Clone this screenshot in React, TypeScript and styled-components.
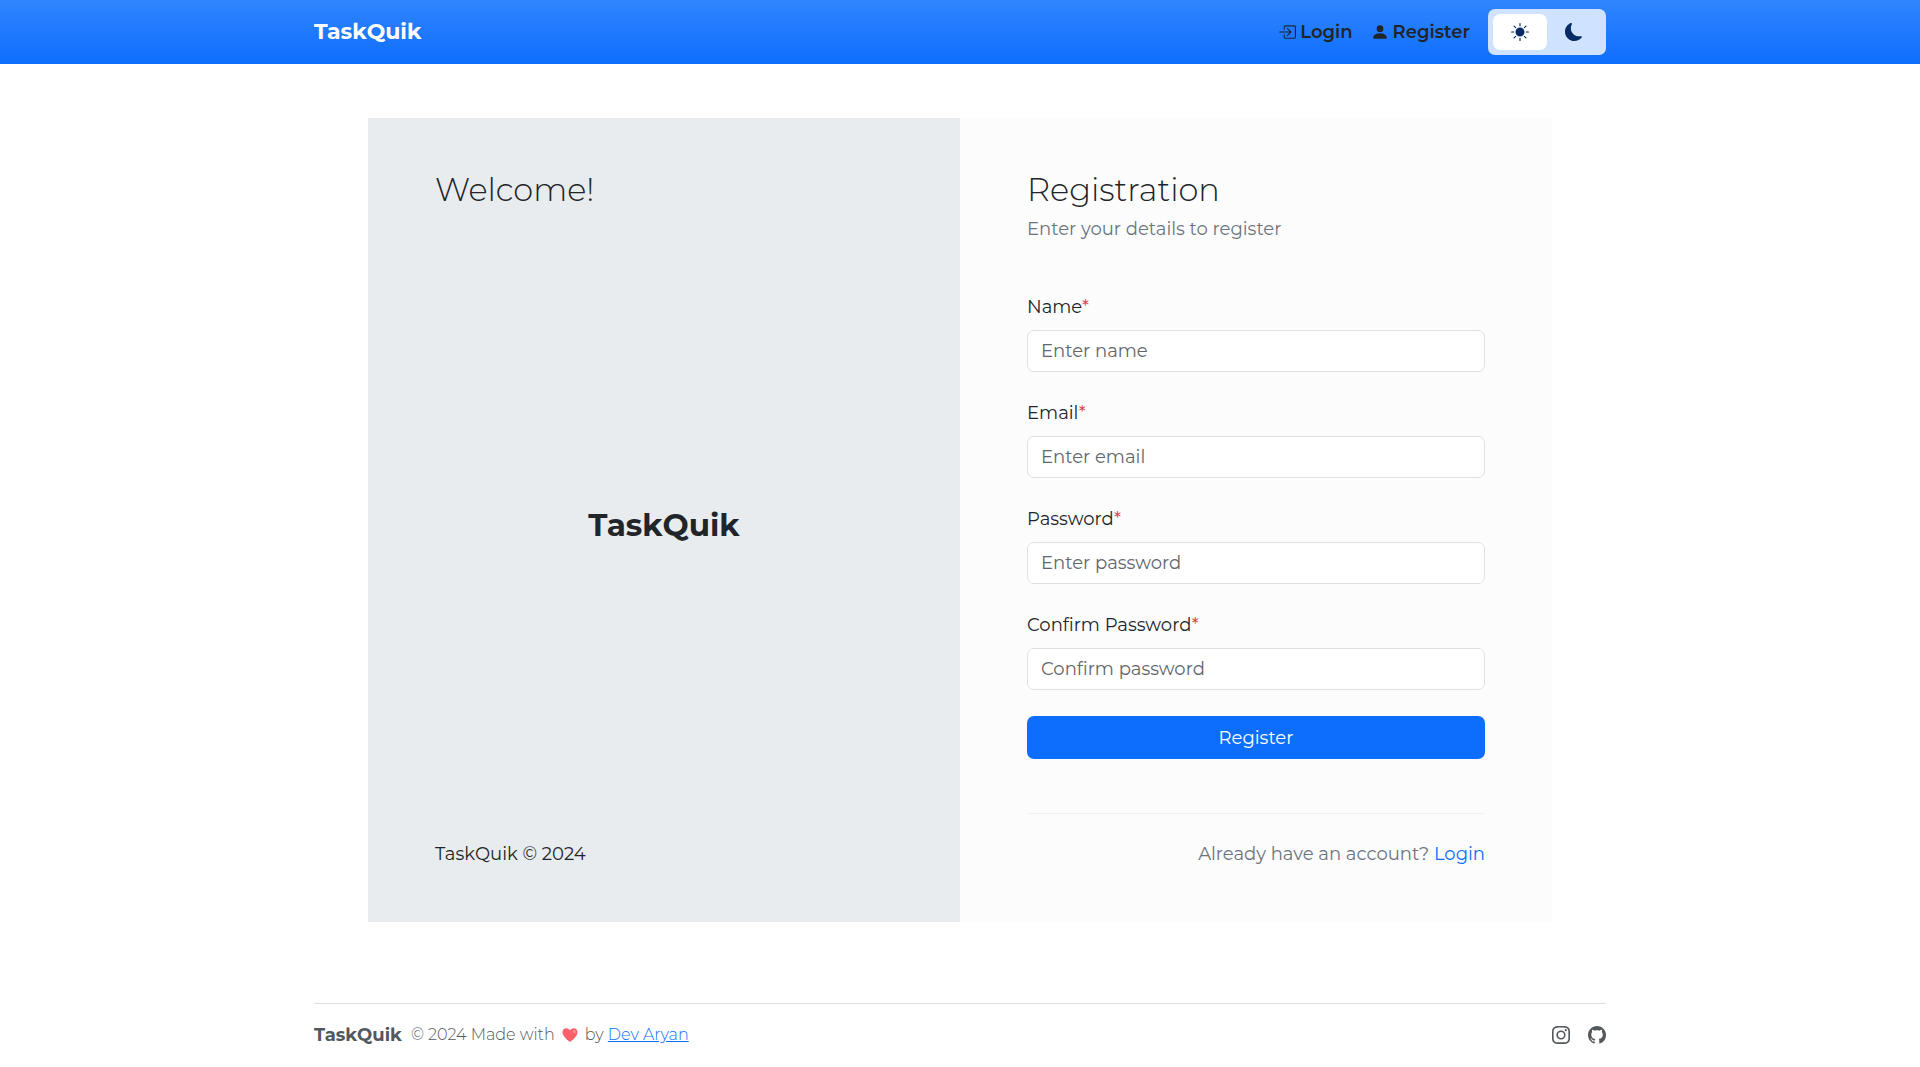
import React, { useState } from "react";
import styled, { createGlobalStyle } from "styled-components";
import {
  BsBoxArrowInRight,
  BsPersonFill,
  BsSunFill,
  BsMoonFill,
  BsInstagram,
  BsGithub,
} from "react-icons/bs";

const GlobalStyle = createGlobalStyle`
  *, *::before, *::after { box-sizing: border-box; }
  body {
    margin: 0;
    background: #fff;
    color: #212529;
    font-family: Montserrat, Inter, "Liberation Sans", sans-serif;
    font-size: 18px;
    font-weight: 400;
    line-height: 26px;
  }
  a { color: #0d6efd; }
`;

const Container = styled.div`
  width: min(1292px, calc(100% - 24px));
  margin: 0 auto;
`;

const NavBar = styled.header`
  background: linear-gradient(180deg, #3185ff, #0d6efd);
`;

const NavInner = styled(Container)`
  display: flex;
  align-items: center;
  justify-content: space-between;
  min-height: 64px;
`;

const Brand = styled.a`
  color: #fff;
  font-size: 22px;
  font-weight: 700;
  text-decoration: none;
`;

const NavLinks = styled.nav`
  display: flex;
  align-items: center;
  gap: 18px;
`;

const NavLink = styled.a`
  display: flex;
  align-items: center;
  gap: 4px;
  color: #212529;
  font-weight: 600;
  text-decoration: none;
`;

const ThemeSwitch = styled.div`
  display: flex;
  padding: 5px;
  border-radius: 7px;
  background: #cfe2ff;
`;

const ThemeButton = styled.button<{ $active: boolean }>`
  display: grid;
  place-items: center;
  width: 54px;
  height: 36px;
  padding: 0;
  border: 0;
  border-radius: 7px;
  background: ${({ $active }) => ($active ? "#fff" : "transparent")};
  color: #052c65;
  font-size: 18px;
  cursor: pointer;
`;

const Card = styled.main`
  display: grid;
  grid-template-columns: 1fr 1fr;
  margin: 54px 54px 81px;
  @media (max-width: 800px) {
    grid-template-columns: 1fr;
    margin: 24px 0;
  }
`;

const Panel = styled.section<{ $tone: string }>`
  display: flex;
  flex-direction: column;
  justify-content: space-between;
  padding: 54px 67px 55px;
  background: ${({ $tone }) => $tone};
`;

const Title = styled.h2`
  margin: 0;
  font-size: 32px;
  font-weight: 300;
  line-height: 36px;
`;

const Logo = styled.h1`
  margin: 0;
  font-size: 31px;
  font-weight: 700;
  line-height: 36px;
  text-align: center;
`;

const Text = styled.p<{ $muted?: boolean; $end?: boolean }>`
  margin: 0;
  color: ${({ $muted }) => ($muted ? "#6c757d" : "inherit")};
  text-align: ${({ $end }) => ($end ? "right" : "left")};
`;

const Intro = styled.div`
  display: grid;
  gap: 8px;
  margin-bottom: 52px;
`;

const Form = styled.form`
  display: grid;
  gap: 26px;
`;

const Fields = styled.div`
  display: grid;
  gap: 28px;
`;

const Field = styled.div`
  display: grid;
  gap: 10px;
`;

const Required = styled.span`
  color: #dc3545;
`;

const Input = styled.input`
  width: 100%;
  height: 42px;
  padding: 0 13px;
  border: 1px solid #dee2e6;
  border-radius: 7px;
  background: #fff;
  color: #212529;
  font: inherit;
  &::placeholder {
    color: #62676c;
    opacity: 1;
  }
`;

const Submit = styled.button`
  height: 43px;
  border: 0;
  border-radius: 7px;
  background: #0d6efd;
  color: #fff;
  font: inherit;
  cursor: pointer;
`;

const Divider = styled.hr`
  width: 100%;
  height: 1px;
  margin: 54px 0 27px;
  border: 0;
  background: #eef0f2;
`;

const PlainLink = styled.a`
  text-decoration: none;
`;

const Footer = styled.footer`
  display: flex;
  align-items: center;
  justify-content: space-between;
  padding: 18px 0;
  border-top: 1px solid #dee2e6;
  color: #53585d;
`;

const Credits = styled.div`
  display: flex;
  align-items: center;
  gap: 9px;
  font-size: 16px;
  font-weight: 300;
`;

const FooterBrand = styled.strong`
  font-size: 18px;
  font-weight: 700;
`;

const Heart = styled.svg`
  width: 16px;
  height: 16px;
  margin: 0 7px;
  vertical-align: -3px;
`;

const Socials = styled.div`
  display: flex;
  gap: 18px;
`;

const SocialLink = styled.a`
  display: flex;
  color: #53585d;
  font-size: 18px;
`;

const fields = [
  { id: "name", label: "Name", type: "text", hint: "Enter name" },
  { id: "email", label: "Email", type: "email", hint: "Enter email" },
  { id: "password", label: "Password", type: "password", hint: "Enter password" },
  { id: "confirm", label: "Confirm Password", type: "password", hint: "Confirm password" },
];

export default function App() {
  const [dark, setDark] = useState(false);
  return (
    <>
      <GlobalStyle />
      <NavBar>
        <NavInner>
          <Brand href="#">TaskQuik</Brand>
          <NavLinks>
            <NavLink href="#login"><BsBoxArrowInRight size={18} />Login</NavLink>
            <NavLink href="#register"><BsPersonFill size={18} />Register</NavLink>
            <ThemeSwitch>
              <ThemeButton type="button" $active={!dark} aria-pressed={!dark} aria-label="Light theme" onClick={() => setDark(false)}>
                <BsSunFill />
              </ThemeButton>
              <ThemeButton type="button" $active={dark} aria-pressed={dark} aria-label="Dark theme" onClick={() => setDark(true)}>
                <BsMoonFill />
              </ThemeButton>
            </ThemeSwitch>
          </NavLinks>
        </NavInner>
      </NavBar>
      <Container>
        <Card>
          <Panel $tone="#e8ecef">
            <Title>Welcome!</Title>
            <Logo>TaskQuik</Logo>
            <Text>TaskQuik © 2024</Text>
          </Panel>
          <Panel $tone="#fcfcfd">
            <Intro>
              <Title>Registration</Title>
              <Text $muted>Enter your details to register</Text>
            </Intro>
            <Form onSubmit={(e) => e.preventDefault()}>
              <Fields>
                {fields.map((f) => (
                  <Field key={f.id}>
                    <label htmlFor={f.id}>{f.label}<Required>*</Required></label>
                    <Input id={f.id} type={f.type} placeholder={f.hint} />
                  </Field>
                ))}
              </Fields>
              <Submit type="submit">Register</Submit>
            </Form>
            <Divider />
            <Text $muted $end>
              Already have an account? <PlainLink href="#login">Login</PlainLink>
            </Text>
          </Panel>
        </Card>
        <Footer>
          <Credits>
            <FooterBrand>TaskQuik</FooterBrand>
            <span>
              © 2024 Made with
              <Heart viewBox="0 0 16 16" aria-hidden="true">
                <path d="M8 15C4 12 .5 8.800.5 5.300 .5 2.900 2.200 1.300 4.300 1.300 5.900 1.300 7.300 2.200 8 3.600 8.700 2.200 10.100 1.300 11.700 1.300c2.100 0 3.800 1.600 3.800 4C15.500 8.800 12 12 8 15z" fill="#fb5f67" />
                <path d="M11 3.200c1.600-.6 2.900.6 2.500 2.300-.3 1-1.500.9-2-.1z" fill="#ff9ba0" />
              </Heart>
              by <a href="#author">Dev Aryan</a>
            </span>
          </Credits>
          <Socials>
            <SocialLink href="#instagram" aria-label="Instagram"><BsInstagram /></SocialLink>
            <SocialLink href="#github" aria-label="GitHub"><BsGithub /></SocialLink>
          </Socials>
        </Footer>
      </Container>
    </>
  );
}
